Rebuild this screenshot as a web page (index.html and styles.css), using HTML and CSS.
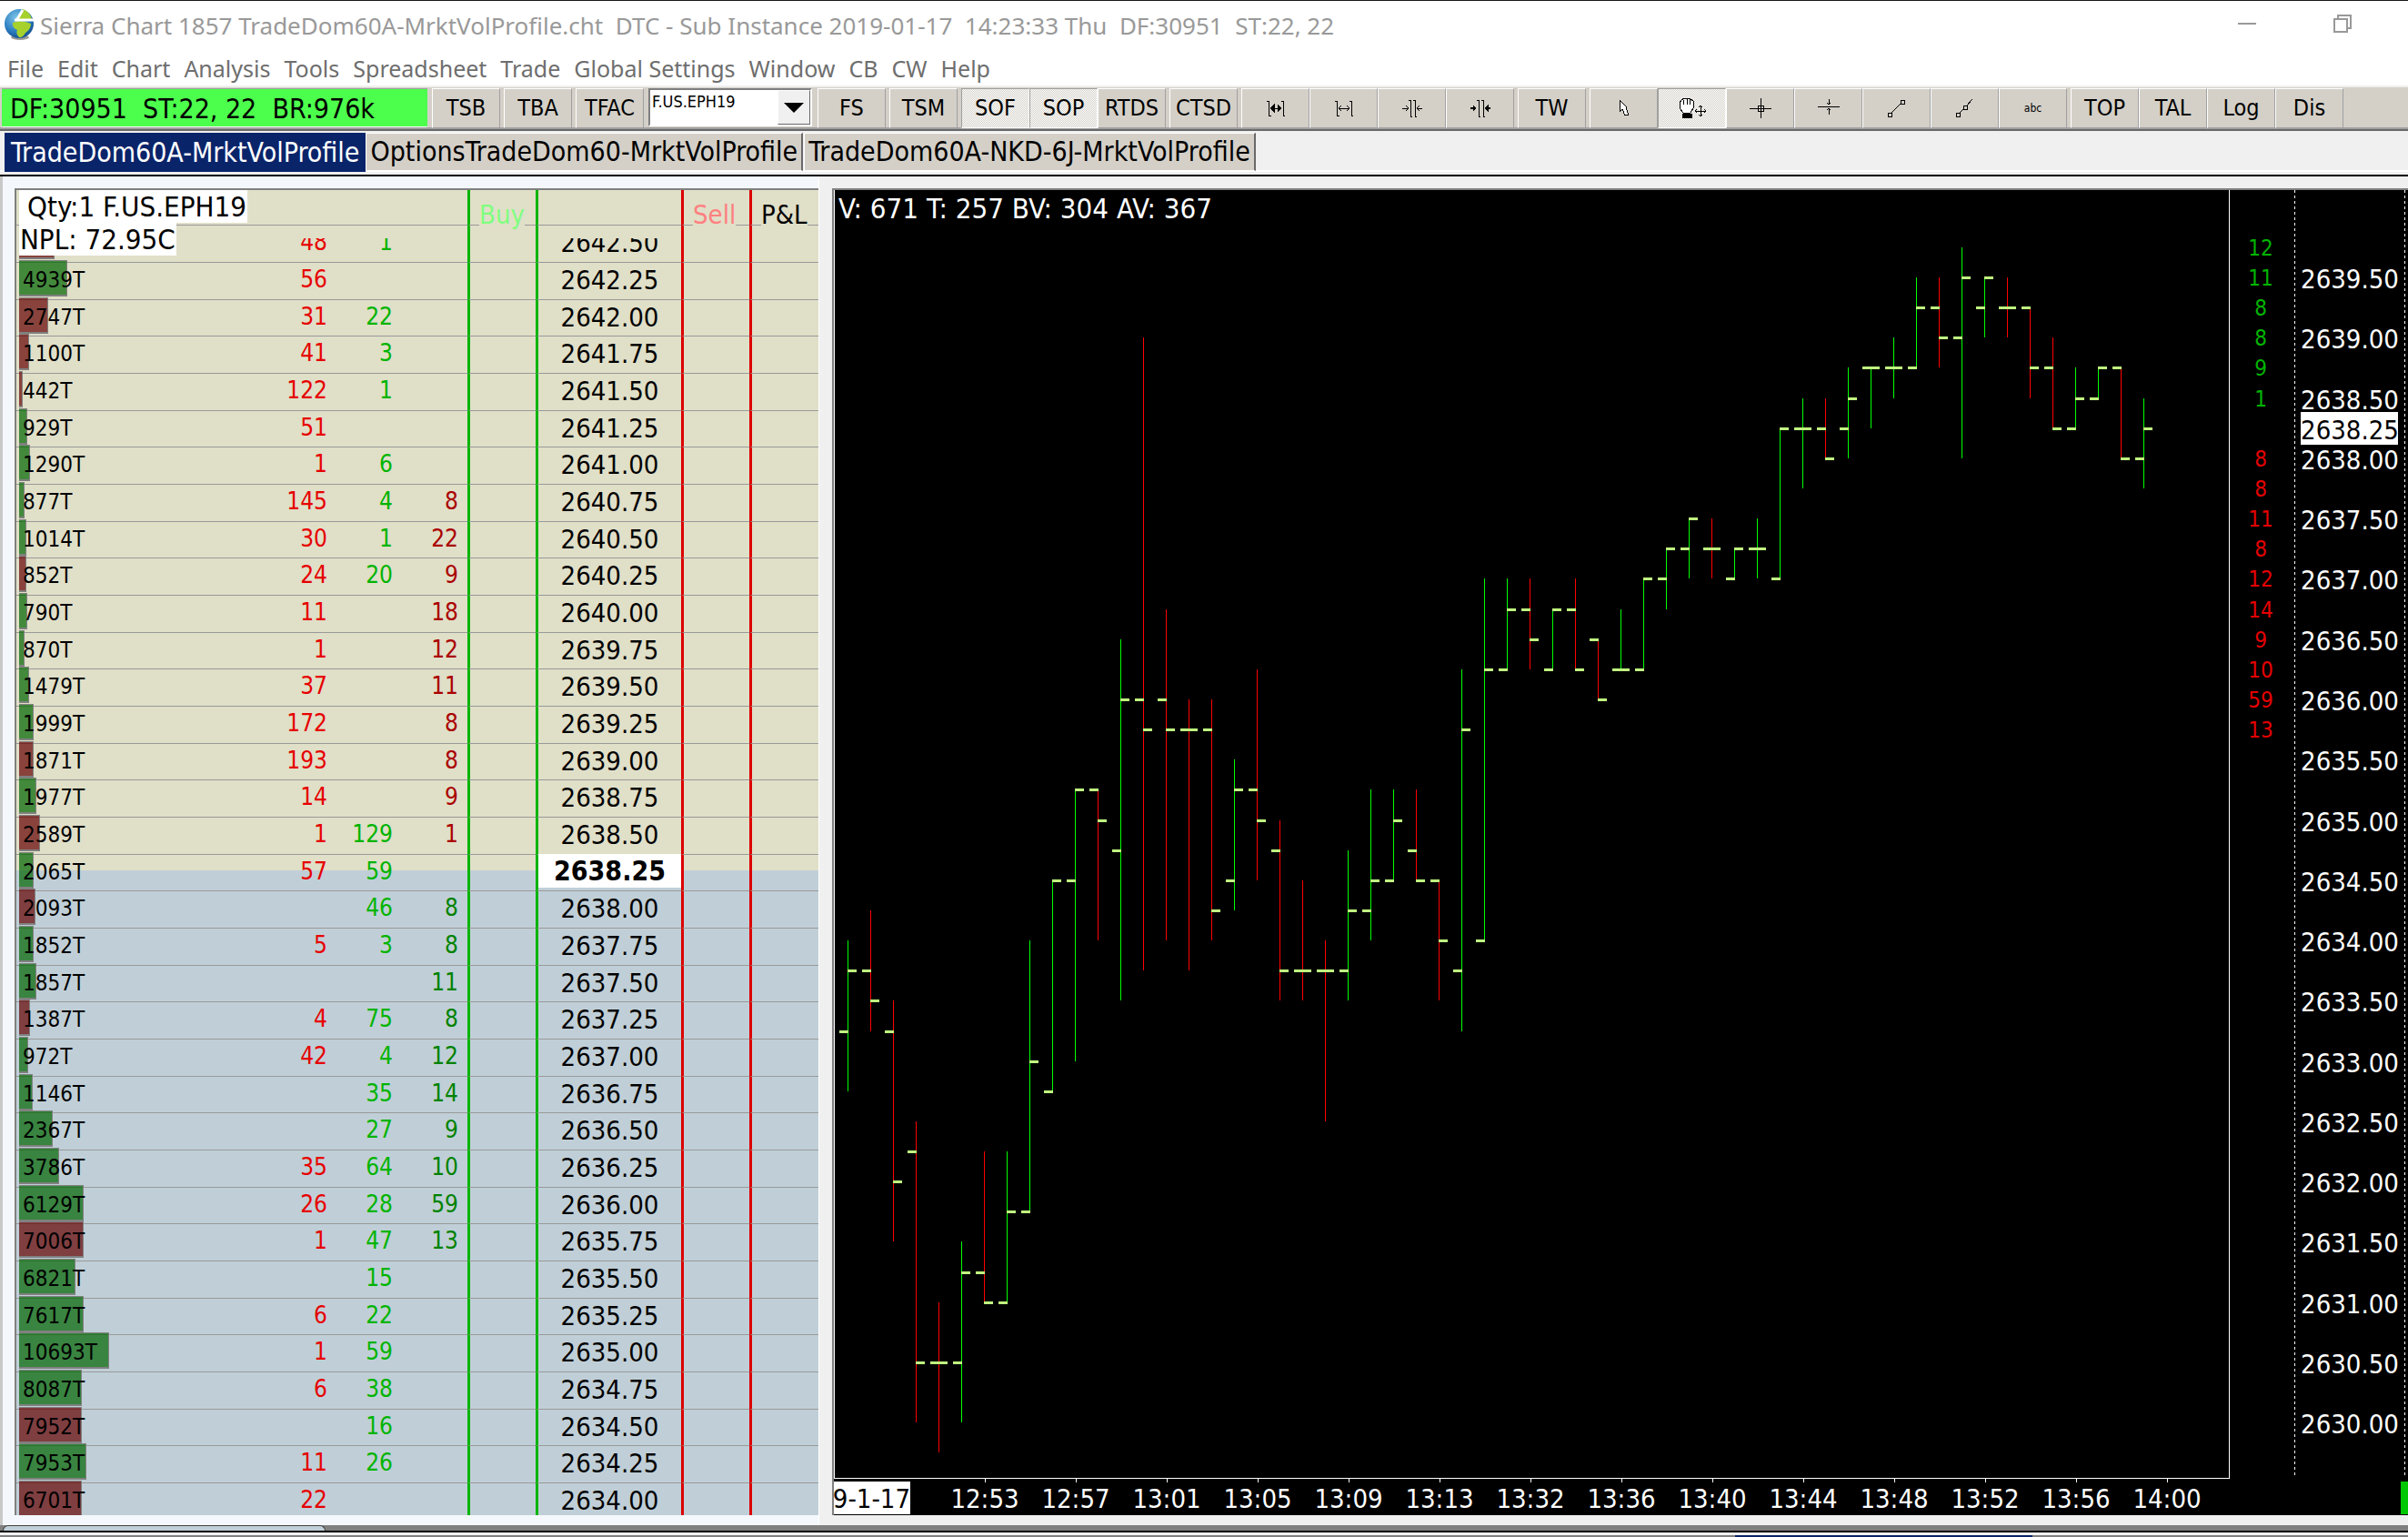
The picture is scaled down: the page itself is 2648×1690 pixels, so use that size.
FILE: index.html
```html
<!DOCTYPE html>
<html lang="en">
<head>
<meta charset="utf-8">
<title>Sierra Chart 1857</title>
<link rel="stylesheet" href="styles.css">
</head>
<body>
<header class="titlebar">
  <svg class="globe" width="34" height="36" viewBox="0 0 34 36">
    <defs><radialGradient id="sea" cx=".4" cy=".3" r=".8"><stop offset="0" stop-color="#7cc4e8"/><stop offset=".6" stop-color="#2a7cc0"/><stop offset="1" stop-color="#0d3f7c"/></radialGradient></defs>
    <ellipse cx="17" cy="32" rx="10" ry="3" fill="#999"/>
    <circle cx="16" cy="17" r="16" fill="url(#sea)"/>
    <path d="M20 1 Q28 4 30 12 L15 13 Z M9 16 Q18 12 29 17 Q29 23 23 27 Q20 33 16 32 Q12 28 14 24 Q8 21 9 16Z" fill="#a6d02c"/>
    <path d="M20 2 L14 12 M11 13 H34" stroke="#fff" stroke-width="3" fill="none"/>
  </svg>
  <h1 class="title">Sierra Chart 1857 TradeDom60A-MrktVolProfile.cht  DTC - Sub Instance 2019-01-17  14:23:33 Thu  DF:30951  ST:22, 22</h1>
  <div class="winbuttons">
    <button class="winbtn" aria-label="Minimize"><svg width="22" height="22"><path d="M1 11H21" stroke="#999" stroke-width="2"/></svg></button>
    <button class="winbtn" aria-label="Restore"><svg width="22" height="22" fill="none" stroke="#999" stroke-width="2"><path d="M2 6H16V20H2ZM6 6V2H20V16H16"/></svg></button>
  </div>
</header>
<nav class="menu">
  <a href="#">File</a><a href="#">Edit</a><a href="#">Chart</a><a href="#">Analysis</a><a href="#">Tools</a><a href="#">Spreadsheet</a><a href="#">Trade</a><a href="#">Global Settings</a><a href="#">Window</a><a href="#">CB</a><a href="#">CW</a><a href="#">Help</a>
</nav>
<div class="toolbar">
  <output class="status">DF:30951  ST:22, 22  BR:976k</output>
  <div class="group"><button class="tool">TSB</button></div>
  <div class="group"><button class="tool">TBA</button></div>
  <div class="group"><button class="tool">TFAC</button></div>
  <div class="picker">
    <select class="symbol" aria-label="Symbol"><option>F.US.EPH19</option></select>
    <span class="arrow"></span>
  </div>
  <div class="group"><button class="tool">FS</button></div>
  <div class="group"><button class="tool">TSM</button></div>
  <div class="group"><button class="tool on">SOF</button><button class="tool on">SOP</button><button class="tool">RTDS</button></div>
  <div class="group"><button class="tool">CTSD</button></div>
  <div class="group">
    <button class="tool" aria-label="Increase spacing"><svg width="20" height="20" class="ico"><path d="M0 2H2V18H5M16 2H18V18H20M4 10H16"/><path d="M8 6L4 10L8 14ZM12 6L16 10L12 14Z" fill="#000"/></svg></button>
    <button class="tool" aria-label="Increase spacing slightly"><svg width="20" height="20" class="ico"><path d="M0 2H2V18H5M16 2H18V18H20M4 10H16M7 7L4 10L7 13M13 7L16 10L13 13"/></svg></button>
    <button class="tool" aria-label="Decrease spacing slightly"><svg width="22" height="20" class="ico"><path d="M7 1H9V19H11M12 1H14V19H16M0 10H7M4 7L7 10L4 13M22 10H16M19 7L16 10L19 13"/></svg></button>
    <button class="tool" aria-label="Decrease spacing"><svg width="22" height="20" class="ico"><path d="M7 1H9V19H11M12 1H14V19H16"/><path d="M3 7L6 10L3 13ZM19 7L16 10L19 13Z" fill="#000"/><path d="M0 10H6M22 10H16" stroke-width="2"/></svg></button>
  </div>
  <div class="group"><button class="tool">TW</button></div>
  <div class="group">
    <button class="tool" aria-label="Pointer"><svg width="16" height="22" class="ico"><path d="M3 2V15L6 12L9 19L13 18L10 11V9Z" fill="#fff"/></svg></button>
    <button class="tool on" aria-label="Hand"><svg width="32" height="26" class="ico"><path d="M6 18L2 13V7L4 4L7 2H13L17 5V13L14 18Z" fill="#fff"/><path d="M6 4V9M10 2V9M13 3V9"/><path d="M5 19H15V23H5Z" fill="#000"/><path d="M25 10V22M19 16H31M23 12L25 10L27 12M23 20L25 22L27 20M21 14L19 16L21 18M29 14L31 16L29 18"/></svg></button>
    <button class="tool" aria-label="Crosshair"><svg width="26" height="22" class="ico"><path d="M13 0V22M1 11H25M10 8H16V14H10Z"/></svg></button>
    <button class="tool" aria-label="Horizontal line"><svg width="26" height="22" class="ico"><path d="M1 9H25M13 1V7M11 5L13 7L15 5M13 18V11M11 13L13 11L15 13"/></svg></button>
    <button class="tool" aria-label="Line"><svg width="22" height="22" class="ico"><path d="M5 16L15 6M1 16H5V20H1ZM15 2H19V6H15Z"/></svg></button>
    <button class="tool" aria-label="Ray"><svg width="22" height="22" class="ico"><path d="M5 16L9 12M13 8L19 1M1 16H5V20H1ZM9 8H13V12H9Z"/></svg></button>
    <button class="tool small">abc</button>
  </div>
  <div class="group"><button class="tool">TOP</button><button class="tool">TAL</button><button class="tool">Log</button><button class="tool">Dis</button></div>
</div>
<div class="tabs">
  <button class="tab active">TradeDom60A-MrktVolProfile</button>
  <button class="tab">OptionsTradeDom60-MrktVolProfile</button>
  <button class="tab">TradeDom60A-NKD-6J-MrktVolProfile</button>
</div>
<main class="desk">
  <section class="domwin">
    <div class="dom">
      <div class="info"><span class="tag qty">Qty:1 F.US.EPH19</span><span class="tag">NPL: 72.95C</span></div>
      <table class="ladder">
        <thead><tr><th class="c-ticks"></th><th class="c-num"></th><th class="c-num"></th><th class="c-num c-last"></th><th class="c-buy"><span>Buy</span></th><th class="c-price"></th><th class="c-sell"><span>Sell</span></th><th class="c-pl"><span>P&amp;L</span></th></tr></thead>
        <tbody id="ladder"></tbody>
      </table>
    </div>
  </section>
  <section class="chartwin">
    <div class="chart">
      <div class="body">
        <div class="plot"><p class="readout">V: 671 T: 257 BV: 304 AV: 367</p><svg id="bars" class="bars"></svg></div>
        <svg id="scale" class="scale"></svg>
      </div>
      <div class="times"><span class="date"><span>9-1-17</span></span><div id="times" class="hours"></div><span class="flag"></span></div>
    </div>
  </section>
</main>
<footer class="dock"><div class="dockleft"></div></footer>
<div class="strip"><span class="strip-on"></span></div>
<script src="script.js"></script>
</body>
</html>
```
FILE: styles.css
```css
* { box-sizing: border-box; }
body {
  margin: 0;
  min-height: 100vh;
  display: flex;
  flex-direction: column;
  overflow: hidden;
  border-top: 1px solid #181818;
  background: #fff;
  color: #000;
  font: 29px/36px "DejaVu Sans Condensed", "DejaVu Sans", sans-serif;
}
button { font: inherit; color: inherit; border: 0; padding: 0; background: none; }

.titlebar { display: flex; align-items: center; height: 55px; padding-left: 5px; }
.globe { flex: none; margin: 0 5px 4px 0; }
.title { margin: 0 0 2px; flex: 1; font: 400 26px/36px "Noto Sans", sans-serif; color: #999; white-space: pre; }
.winbuttons { display: flex; gap: 83px; padding: 0 61px 6px 0; }
.winbtn { width: 22px; height: 22px; line-height: 0; }

.menu { display: flex; gap: 15px; height: 38px; padding-left: 8px; font: 25px/38px "Noto Sans", sans-serif; }
.menu a { color: #6e6e6e; text-decoration: none; white-space: nowrap; }

.toolbar {
  display: flex;
  gap: 4px;
  height: 50px;
  padding: 1px 0 3px 2px;
  background: #d4d0c8;
  border-top: 2px solid #f0f0f0;
  border-bottom: 2px solid #696969;
  box-shadow: inset 0 -2px #a0a0a0;
}
.status { width: 468px; height: 43px; margin-right: 1px; padding-left: 9px; background: #4dff4d; font-size: 30px; line-height: 44px; white-space: pre; border-top: 1px solid #a0a0a0; border-bottom: 1px solid #fff; }
.group { display: flex; }
.tool {
  width: 75px;
  height: 44px;
  display: flex;
  align-items: center;
  justify-content: center;
  font-size: 25px;
  border: solid;
  border-width: 1px;
  border-color: #fff #a0a0a0 #a0a0a0 #fff;
}
.tool.on { background: repeating-conic-gradient(#fff 0 25%, #d4d0c8 0 50%) 0 0 / 2px 2px; border-color: #a0a0a0 #fff #fff #a0a0a0; }
.tool.small { font-size: 12px; }
.ico { fill: none; stroke: #000; stroke-width: 1; shape-rendering: crispEdges; }
.picker { display: flex; width: 180px; height: 42px; margin: 0 2px 0 1px; border: 2px solid #808080; border-right-color: #fff; border-bottom-color: #fff; background: #fff; }
.symbol { flex: 1; min-width: 0; height: 26px; appearance: none; border: 0; padding: 0 2px; background: #fff; color: #000; font: 18px/24px "DejaVu Sans Condensed", sans-serif; }
.arrow { width: 36px; background: #f0f0f0; border: 1px solid #fff; border-right-color: #696969; border-bottom-color: #696969; display: grid; place-items: center; }
.arrow::before { content: ""; border: 11px solid transparent; border-top-color: #000; border-bottom: 0; }

.tabs { display: flex; align-items: flex-start; height: 48px; padding: 2px 0 0 5px; background: #f0f0f0; box-shadow: inset 0 -3px #f0f0f0, inset 0 -5px #fff; }
.tab { height: 42px; padding: 0 4px; margin-right: 1px; white-space: nowrap; background: #d4d0c8; border: 1px solid #fff; border-right: 2px solid #696969; font-size: 30px; }
.tab.active { height: 43px; margin: 0; padding: 0 7px; background: #0a246a; color: #fff; border: 0; }

.desk { display: flex; flex: 1; min-height: 0; border-top: 2px solid #000; background: #f0f0f0; }
.domwin { flex: none; width: 901px; padding: 13px 0 10px 13px; background: #f4f8fc; border-left: 3px solid #c8c8c8; border-right: 1px solid #fff; }
.chartwin { flex: 1; min-width: 0; padding: 13px 0 10px 14px; }
.dom, .chart { height: 1459px; border-top: 2px solid #808080; border-left: 2px solid #808080; overflow: hidden; }
.dom { position: relative; background: #c0cfd7; }
.info { position: absolute; z-index: 1; left: 3px; top: 0; display: flex; flex-direction: column; align-items: flex-start; font-size: 31px; }
.tag { background: #fff; padding: 0 1px; white-space: nowrap; }
.tag.qty { padding-left: 9px; }

.ladder { width: 100%; table-layout: fixed; border-collapse: separate; border-spacing: 0; }
.ladder th { height: 38px; padding: 0; font-weight: 400; background: #e0dfc8; line-height: 54px; text-align: left; vertical-align: top; }
.ladder th span { display: block; width: max-content; height: 39px; margin: 0 10px -1px; background: #e0dfc8; position: relative; }
.ladder td { height: 41px; padding: 0; line-height: 36px; border-top: 1px solid #999; font-size: 26px; text-align: right; vertical-align: top; white-space: nowrap; }
.ladder tr:nth-child(3n) td { height: 40px; }
.ask td { background: #e0dfc8; }
.bid td { background: #c0cfd7; }
.last td { background: linear-gradient(#e0dfc8 17px, #c0cfd7 17px); }
.c-ticks { width: 270px; }
.c-num { width: 72px; }
.c-last { width: 82px; }
.c-buy, .c-price { border-left: 3px solid #00b400; }
.c-sell, .c-pl { border-left: 3px solid #dc0000; }
.c-buy { width: 75px; color: #80ff80; }
.c-price { width: 160px; }
.c-sell { width: 75px; color: #ff8080; }
.ladder td.c-ticks { position: relative; padding-left: 7px; text-align: left; font-size: 24px; line-height: 39px; }
.ladder td.c-price { font-size: 29px; line-height: 38px; text-align: center; }
.ladder td.c-buy, .ladder td.c-price { border-left: 3px solid #00b400; }
.ladder td.c-sell, .ladder td.c-pl { border-left: 3px solid #dc0000; }
.first span { display: inline-block; clip-path: inset(14px 0 0); }
.t-sell { color: #e60000; }
.t-buy { color: #00b400; }
.ladder td.depth { padding-right: 10px; }
.ask .depth, .last .depth { color: #aa0000; }
.bid .depth { color: #008200; }
.vol { position: absolute; left: 3px; top: -3px; height: 40px; border: 1px solid #808080; border-left: 0; border-bottom-width: 2px; }
.vol.up { background: rgba(0, 100, 0, .7); }
.vol.down { background: rgba(100, 0, 0, .7); }
.label { position: relative; }
.last td.c-price strong { display: block; height: 37px; margin: -1px 0 0; line-height: 38px; background: #fff; font-size: 30px; }

.chart { display: flex; flex-direction: column; background: #000; color: #fff; }
.body { flex: 1; min-height: 0; display: flex; }
.plot { flex: 1; min-width: 0; position: relative; border-left: 1px solid #fff; border-right: 1px solid #fff; border-bottom: 1px solid #fff; }
.readout { position: absolute; left: 4px; top: 2px; margin: 0; font-size: 31px; white-space: nowrap; }
.bars { display: block; width: 100%; height: 100%; }
.scale { flex: none; width: 196px; height: 100%; }
.scale text { font-size: 29px; fill: #fff; text-anchor: middle; }
.scale .asks { font-size: 24px; fill: #00b400; }
.scale .bids { font-size: 24px; fill: #e60000; }
.scale .now { fill: #000; }
.times { flex: none; display: flex; height: 40px; padding-top: 3px; line-height: 38px; }
.date { flex: none; width: 84px; height: 36px; background: #fff; color: #000; overflow: hidden; display: flex; justify-content: flex-end; white-space: nowrap; }
.hours { flex: 1; display: flex; padding-left: 32px; }
.hours span { flex: none; width: 100px; text-align: center; position: relative; }
.hours span::before { content: ""; position: absolute; left: 50px; top: -3px; height: 4px; border-left: 1px solid #fff; }
.flag { width: 8px; height: 36px; background: #00c800; }

.dock { display: flex; align-items: flex-end; height: 6px; background: #808080; }
.dockleft { width: 355px; height: 6px; margin-left: 3px; background: #c0cfd7; border: 1px solid #404040; border-bottom: 0; border-radius: 6px 6px 0 0; }
.strip { height: 7px; display: flex; align-items: flex-end; padding-left: 1908px; background: #f0f0f0; border-top: 2px solid #000; box-shadow: inset 0 -2px #808080; }
.strip-on { width: 327px; height: 2px; background: #0a246a; }
```
FILE: script.js
```js
// Ladder rows from 2642.50 down: [tick count, bar width, direction, sells, buys, depth]
const rows = [
  ["", 39, "down", 48, 1, ""], ["4939T", 53, "up", 56, "", ""], ["2747T", 32, "down", 31, 22, ""],
  ["1100T", 11, "down", 41, 3, ""], ["442T", 4, "down", 122, 1, ""], ["929T", 9, "up", 51, "", ""],
  ["1290T", 12, "up", 1, 6, ""], ["877T", 6, "up", 145, 4, 8], ["1014T", 8, "up", 30, 1, 22],
  ["852T", 8, "down", 24, 20, 9], ["790T", 9, "up", 11, "", 18], ["870T", 6, "up", 1, "", 12],
  ["1479T", 11, "up", 37, "", 11], ["1999T", 16, "up", 172, "", 8], ["1871T", 16, "down", 193, "", 8],
  ["1977T", 19, "up", 14, "", 9], ["2589T", 23, "down", 1, 129, 1], ["2065T", 16, "up", 57, 59, ""],
  ["2093T", 18, "down", "", 46, 8], ["1852T", 16, "up", 5, 3, 8], ["1857T", 19, "up", "", "", 11],
  ["1387T", 12, "down", 4, 75, 8], ["972T", 10, "up", 42, 4, 12], ["1146T", 15, "up", "", 35, 14],
  ["2367T", 37, "up", "", 27, 9], ["3786T", 44, "up", 35, 64, 10], ["6129T", 71, "up", 26, 28, 59],
  ["7006T", 71, "down", 1, 47, 13], ["6821T", 62, "up", "", 15, ""], ["7617T", 71, "up", 6, 22, ""],
  ["10693T", 99, "up", 1, 59, ""], ["8087T", 69, "up", 6, 38, ""], ["7952T", 69, "down", "", 16, ""],
  ["7953T", 74, "up", 11, 26, ""], ["6701T", 69, "down", 22, "", ""]
];
const LAST = 17;
document.getElementById("ladder").innerHTML = rows.map(([label, w, dir, sell, buy, depth], i) => {
  const price = (2642.5 - i * 0.25).toFixed(2);
  const cls = (i < LAST ? "ask" : i === LAST ? "last" : "bid") + (i === 0 ? " first" : "");
  const shown = i === LAST ? `<strong>${price}</strong>` : `<span>${price}</span>`;
  return `<tr class="${cls}"><td class="c-ticks"><i class="vol ${dir}" style="width:${w}px"></i><span class="label">${label}</span></td>` +
    `<td class="t-sell"><span>${sell}</span></td><td class="t-buy"><span>${buy}</span></td><td class="depth">${depth}</td>` +
    `<td class="c-buy"></td><td class="c-price">${shown}</td><td class="c-sell"></td><td class="c-pl"></td></tr>`;
}).join("");

// Price bars in quarter-point ticks above 2629.75: open, high, low, close, u(p) or d(own)
const bars = `14 17 12 16 u|16 18 14 15 d|14 15 7 9 d|10 11 1 3 d|3 5 0 3 d|3 7 1 6 u|6 10 5 5 d|5 10 5 8 u|8 17 8 13 u|12 19 12 19 u
19 22 13 22 u|22 22 17 21 d|20 27 15 25 u|25 37 16 24 d|25 28 17 24 d|24 25 16 24 d|24 25 17 18 d|19 23 18 22 u|22 26 19 21 d|20 21 15 16 d
16 19 15 16 d|16 17 11 16 d|16 20 15 18 u|18 22 17 19 u|19 22 19 21 u|20 22 19 19 d|19 19 15 17 d|16 26 14 24 u|17 29 17 26 u|26 29 26 28 u
28 29 26 27 d|26 28 26 28 u|28 29 26 26 d|27 27 25 25 d|26 28 26 26 u|26 29 26 29 u|29 30 28 30 u|30 31 29 31 u|30 31 29 30 d|29 30 29 30 u
30 31 29 30 u|29 34 29 34 u|34 35 32 34 u|34 35 33 33 d|34 36 33 35 u|36 36 34 36 u|36 37 35 36 u|36 39 36 38 u|38 39 36 37 d|37 40 33 39 u
38 39 37 39 u|38 39 37 38 d|38 38 35 36 d|36 37 34 34 d|34 36 34 35 u|35 36 35 36 u|36 36 33 33 d|33 35 32 34 u`.split(/[|\n]/);
const y = t => Math.round(96 + (39 - t) * 33.14);
const rect = (x, top, w, h, fill) => `<rect x="${x}" y="${top}" width="${w}" height="${h}" fill="${fill}"/>`;
document.getElementById("bars").innerHTML = bars.map((line, i) => {
  const [o, h, l, c, dir] = line.split(" ");
  const x = 14 + i * 25;
  return rect(x, y(h), 1, y(l) - y(h), dir === "u" ? "#00ff00" : "#ff0000") +
    rect(x - 9, y(o) - 1, 10, 3, "#c0ff80") + rect(x, y(c) - 1, 10, 3, "#c0ff80");
}).join("");

const sizes = [12, 11, 8, 8, 9, 1, "", 8, 8, 11, 8, 12, 14, 9, 10, 59, 13];
const side = sizes.map((n, i) => `<text class="${i < 6 ? "asks" : "bids"}" x="34" y="${y(40 - i) + 9}">${n}</text>`).join("");
let prices = "";
for (let t = 39; t > 0; t -= 2) prices += `<text x="132" y="${y(t) + 12}">${(2629.75 + t * 0.25).toFixed(2)}</text>`;
const dash = x => `<path d="M${x} 0V1414" stroke="#fff" stroke-dasharray="3 3" shape-rendering="crispEdges"/>`;
document.getElementById("scale").innerHTML = dash(71) + dash(192) + side + prices +
  rect(78, y(34) - 18, 107, 36, "#fff") + `<text class="now" x="132" y="${y(34) + 12}">2638.25</text>`;

const times = ["12:53", "12:57", "13:01", "13:05", "13:09", "13:13", "13:32", "13:36", "13:40", "13:44", "13:48", "13:52", "13:56", "14:00"];
document.getElementById("times").innerHTML = times.map(t => `<span>${t}</span>`).join("");
```
